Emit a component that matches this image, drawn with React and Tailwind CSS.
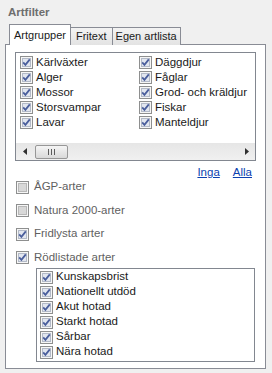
import React from "react";

const groupsLeft = ["Kärlväxter", "Alger", "Mossor", "Storsvampar", "Lavar"];
const groupsRight = ["Däggdjur", "Fåglar", "Grod- och kräldjur", "Fiskar", "Manteldjur"];
const redlist = [
  "Kunskapsbrist",
  "Nationellt utdöd",
  "Akut hotad",
  "Starkt hotad",
  "Sårbar",
  "Nära hotad",
];

// Win7 style checkbox
const Check = ({ checked = true }) => (
  <svg width="13" height="13" viewBox="0 0 13 13" className="shrink-0">
    <rect x="0.5" y="0.5" width="12" height="12" fill="#f6f6f6" stroke="#8e8f8f" />
    <rect
      x="2.5"
      y="2.5"
      width="8"
      height="8"
      fill={checked ? "#e2e6ef" : "#d8d8d8"}
      stroke={checked ? "#b3bac8" : "#b8b8b8"}
    />
    {checked && (
      <path
        d="M3.2 6.4 L5.4 8.8 L9.8 3.4"
        stroke="#4a5e9c"
        strokeWidth="1.8"
        fill="none"
      />
    )}
  </svg>
);

const Row = ({ label }) => (
  <div className="flex items-center gap-[3px] h-[15px] text-[#1a1a1a]">
    <Check />
    <span className="leading-none">{label}</span>
  </div>
);

const Option = ({ label, checked }) => (
  <div className="flex items-center gap-[5px] h-[16px] pl-[10px] text-[#5f5f5f]">
    <Check checked={checked} />
    <span className="leading-none">{label}</span>
  </div>
);

const App = () => {
  return (
    <div
      className="w-[272px] h-[373px] bg-[#f0f0f0] pl-[5px] text-[11.5px] overflow-hidden"
      style={{ fontFamily: '"Liberation Sans", Arial, sans-serif' }}
    >
      {/* ======= Title ======= */}
      <div className="h-[24px] pt-[4px] pl-[3px] font-bold text-[#6e6e6e]">
        Artfilter
      </div>

      {/* ======= Tabs ======= */}
      <div className="flex items-end h-[21px] pl-[4px] relative z-10 -mb-px text-[11px] text-[#1a1a1a]">
        <div className="h-[21px] px-[4px] flex items-center bg-white border border-b-0 border-[#898c95]">
          Artgrupper
        </div>
        <div className="h-[18px] px-[5px] flex items-center bg-gradient-to-b from-[#f3f3f3] to-[#e3e3e3] border border-l-0 border-b-0 border-[#898c95]">
          Fritext
        </div>
        <div className="h-[18px] px-[3px] flex items-center bg-gradient-to-b from-[#f3f3f3] to-[#e3e3e3] border border-l-0 border-b-0 border-[#898c95]">
          Egen artlista
        </div>
      </div>

      {/* ======= Tab page ======= */}
      <div className="w-[261px] h-[325px] bg-white border border-[#898c95]">
        {/* species group list */}
        <div className="ml-[9px] mt-[7px] w-[241px] h-[109px] border border-[#828790] flex flex-col">
          <div className="flex-1 flex pl-[4px] pt-[2px]">
            <div className="w-[119px] flex flex-col">
              {groupsLeft.map((g) => (
                <Row key={g} label={g} />
              ))}
            </div>
            <div className="flex flex-col">
              {groupsRight.map((g) => (
                <Row key={g} label={g} />
              ))}
            </div>
          </div>
          {/* horizontal scrollbar */}
          <div className="h-[17px] bg-gradient-to-b from-[#e6e6e6] to-[#f0f0f0] flex items-center">
            <div className="w-[17px] flex items-center justify-center">
              <svg width="4" height="7" viewBox="0 0 4 7">
                <path d="M4 0 L0 3.5 L4 7 Z" fill="#303030" />
              </svg>
            </div>
            <div className="ml-[2px] w-[33px] h-[14px] rounded-[2px] border border-[#979797] bg-gradient-to-b from-[#f5f5f5] to-[#d9d9d9] flex items-center justify-center gap-[2px]">
              <span className="w-px h-[6px] bg-[#5c5c5c]" />
              <span className="w-px h-[6px] bg-[#5c5c5c]" />
              <span className="w-px h-[6px] bg-[#5c5c5c]" />
            </div>
            <div className="flex-1" />
            <div className="w-[17px] flex items-center justify-center">
              <svg width="4" height="7" viewBox="0 0 4 7">
                <path d="M0 0 L4 3.5 L0 7 Z" fill="#303030" />
              </svg>
            </div>
          </div>
        </div>

        {/* select links */}
        <div className="flex justify-end gap-[13px] pr-[13px] mt-[6px] h-[14px] text-[#0b3fb0]">
          <span className="underline leading-none">Inga</span>
          <span className="underline leading-none">Alla</span>
        </div>

        {/* other filters */}
        <div className="flex flex-col gap-[7.5px] mt-[-2px]">
          <Option label="ÅGP-arter" checked={false} />
          <Option label="Natura 2000-arter" checked={false} />
          <Option label="Fridlysta arter" checked />
          <Option label="Rödlistade arter" checked />
        </div>

        {/* red list categories */}
        <div className="ml-[30px] mt-[2px] w-[219px] border border-[#828790] pl-[3px] pt-px pb-px">
          {redlist.map((r) => (
            <Row key={r} label={r} />
          ))}
        </div>
      </div>
    </div>
  );
};

export default App;
